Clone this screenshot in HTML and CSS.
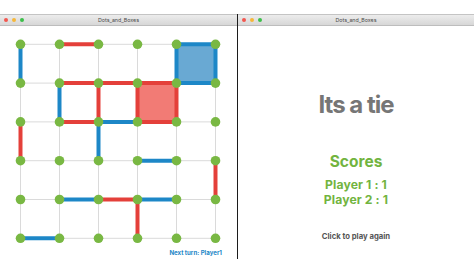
FILE: index.html
```html
<!DOCTYPE html>
<html>
<head>
<meta name="viewport" content="width=device-width, initial-scale=1">
<link rel="stylesheet" href="styles.css">
</head>
<body>
<div class="desk">

<div class="window" id="board">
  <div class="titlebar">
    <span class="light red"></span><span class="light yellow"></span><span class="light green"></span>
    <span class="title">Dots_and_Boxes</span>
  </div>
  <svg class="grid" width="237" height="222" viewBox="0 0 237 222">
    <g class="guides">
      <line x1="20.5" y1="18.3" x2="215.5" y2="18.3"/>
      <line x1="20.5" y1="57.1" x2="215.5" y2="57.1"/>
      <line x1="20.5" y1="95.9" x2="215.5" y2="95.9"/>
      <line x1="20.5" y1="134.7" x2="215.5" y2="134.7"/>
      <line x1="20.5" y1="173.5" x2="215.5" y2="173.5"/>
      <line x1="20.5" y1="212.3" x2="215.5" y2="212.3"/>
      <line x1="20.5" y1="18.3" x2="20.5" y2="212.3"/>
      <line x1="59.5" y1="18.3" x2="59.5" y2="212.3"/>
      <line x1="98.5" y1="18.3" x2="98.5" y2="212.3"/>
      <line x1="137.5" y1="18.3" x2="137.5" y2="212.3"/>
      <line x1="176.5" y1="18.3" x2="176.5" y2="212.3"/>
      <line x1="215.5" y1="18.3" x2="215.5" y2="212.3"/>
    </g>
    <rect class="box-blue" x="176.5" y="18.3" width="39" height="38.8"/>
    <rect class="box-red" x="137.5" y="57.1" width="39" height="38.8"/>
    <g class="edge-red">
      <line x1="59.5" y1="18.3" x2="98.5" y2="18.3"/>
      <line x1="57.5" y1="57.1" x2="178.5" y2="57.1"/>
      <line x1="98.5" y1="57.1" x2="98.5" y2="95.9"/>
      <line x1="137.5" y1="57.1" x2="137.5" y2="95.9"/>
      <line x1="176.5" y1="57.1" x2="176.5" y2="95.9"/>
      <line x1="135.5" y1="95.9" x2="178.5" y2="95.9"/>
      <line x1="59.5" y1="95.9" x2="98.5" y2="95.9"/>
      <line x1="20.5" y1="95.9" x2="20.5" y2="134.7"/>
      <line x1="215.5" y1="134.7" x2="215.5" y2="173.5"/>
      <line x1="98.5" y1="173.5" x2="137.5" y2="173.5"/>
      <line x1="137.5" y1="173.5" x2="137.5" y2="212.3"/>
    </g>
    <g class="edge-blue">
      <line x1="20.5" y1="18.3" x2="20.5" y2="57.1"/>
      <line x1="174.5" y1="18.3" x2="217.5" y2="18.3"/>
      <line x1="178.5" y1="57.1" x2="217.5" y2="57.1"/>
      <line x1="176.5" y1="18.3" x2="176.5" y2="57.1"/>
      <line x1="215.5" y1="18.3" x2="215.5" y2="57.1"/>
      <line x1="59.5" y1="57.1" x2="59.5" y2="95.9"/>
      <line x1="98.5" y1="95.9" x2="137.5" y2="95.9"/>
      <line x1="98.5" y1="95.9" x2="98.5" y2="134.7"/>
      <line x1="137.5" y1="134.7" x2="176.5" y2="134.7"/>
      <line x1="59.5" y1="173.5" x2="98.5" y2="173.5"/>
      <line x1="137.5" y1="173.5" x2="176.5" y2="173.5"/>
      <line x1="20.5" y1="212.3" x2="59.5" y2="212.3"/>
    </g>
    <g class="dots">
      <circle cx="20.5" cy="18.3" r="4.8"/><circle cx="59.5" cy="18.3" r="4.8"/><circle cx="98.5" cy="18.3" r="4.8"/><circle cx="137.5" cy="18.3" r="4.8"/><circle cx="176.5" cy="18.3" r="4.8"/><circle cx="215.5" cy="18.3" r="4.8"/>
      <circle cx="20.5" cy="57.1" r="4.8"/><circle cx="59.5" cy="57.1" r="4.8"/><circle cx="98.5" cy="57.1" r="4.8"/><circle cx="137.5" cy="57.1" r="4.8"/><circle cx="176.5" cy="57.1" r="4.8"/><circle cx="215.5" cy="57.1" r="4.8"/>
      <circle cx="20.5" cy="95.9" r="4.8"/><circle cx="59.5" cy="95.9" r="4.8"/><circle cx="98.5" cy="95.9" r="4.8"/><circle cx="137.5" cy="95.9" r="4.8"/><circle cx="176.5" cy="95.9" r="4.8"/><circle cx="215.5" cy="95.9" r="4.8"/>
      <circle cx="20.5" cy="134.7" r="4.8"/><circle cx="59.5" cy="134.7" r="4.8"/><circle cx="98.5" cy="134.7" r="4.8"/><circle cx="137.5" cy="134.7" r="4.8"/><circle cx="176.5" cy="134.7" r="4.8"/><circle cx="215.5" cy="134.7" r="4.8"/>
      <circle cx="20.5" cy="173.5" r="4.8"/><circle cx="59.5" cy="173.5" r="4.8"/><circle cx="98.5" cy="173.5" r="4.8"/><circle cx="137.5" cy="173.5" r="4.8"/><circle cx="176.5" cy="173.5" r="4.8"/><circle cx="215.5" cy="173.5" r="4.8"/>
      <circle cx="20.5" cy="212.3" r="4.8"/><circle cx="59.5" cy="212.3" r="4.8"/><circle cx="98.5" cy="212.3" r="4.8"/><circle cx="137.5" cy="212.3" r="4.8"/><circle cx="176.5" cy="212.3" r="4.8"/><circle cx="215.5" cy="212.3" r="4.8"/>
    </g>
  </svg>
  <div class="turn">Next turn: Player1</div>
</div>

<div class="window" id="result">
  <div class="titlebar">
    <span class="light red"></span><span class="light yellow"></span><span class="light green"></span>
    <span class="title">Dots_and_Boxes</span>
  </div>
  <div class="result-body">
    <div class="verdict">Its a tie</div>
    <div class="scores-head">Scores</div>
    <div class="score">Player 1 : 1</div>
    <div class="score">Player 2 : 1</div>
    <div class="again">Click to play again</div>
  </div>
</div>

</div>
</body>
</html>
```

FILE: styles.css
```css
body {
  margin: 0;
  background: #ffffff;
  font-family: "Inter", "Liberation Sans", sans-serif;
}

.desk {
  display: flex;
  padding-top: 14px;
  height: 245px;
  overflow: hidden;
}

.window {
  width: 237px;
  background: #ffffff;
  display: flex;
  flex-direction: column;
}

#result {
  border-left: 1px solid #1c1c1c;
}

/* mac style title bar */
.titlebar {
  position: relative;
  height: 10px;
  border-top: 1px solid #c4c4c4;
  border-bottom: 1px solid #bdbdbd;
  background: linear-gradient(#ececec, #d7d7d7);
  display: flex;
  align-items: center;
  gap: 3.7px;
  padding-left: 4px;
}

.light {
  width: 4.2px;
  height: 4.2px;
  border-radius: 50%;
}
.light.red { background: #f2574f; }
.light.yellow { background: #f6b73a; }
.light.green { background: #3cbf4a; }

.title {
  position: absolute;
  left: 0;
  right: 0;
  text-align: center;
  font-size: 5.3px;
  color: #4a4a4a;
  line-height: 10px;
}

.grid {
  display: block;
}

.guides line {
  stroke: #dadada;
  stroke-width: 1;
}

.box-blue { fill: #69a9d3; }
.box-red { fill: #f27b75; }

.edge-red line {
  stroke: #e4403a;
  stroke-width: 4;
}

.edge-blue line {
  stroke: #1d87c7;
  stroke-width: 4;
}

.dots circle {
  fill: #79b843;
}

.turn {
  text-align: right;
  padding-right: 15px;
  font-size: 6.1px;
  font-weight: 700;
  line-height: 10px;
  color: #1d87c7;
}

.result-body {
  display: flex;
  flex-direction: column;
  align-items: center;
  padding-top: 64px;
}

.verdict {
  font-size: 24px;
  line-height: 30px;
  font-weight: 700;
  color: #767676;
  letter-spacing: -1px;
}

.scores-head {
  margin-top: 32px;
  font-size: 15.5px;
  line-height: 20px;
  font-weight: 700;
  color: #72b43f;
}

.score {
  font-size: 12.2px;
  line-height: 14.7px;
  font-weight: 700;
  color: #72b43f;
  letter-spacing: 0.1px;
}

.scores-head + .score {
  margin-top: 6px;
}

.again {
  margin-top: 25px;
  font-size: 7.7px;
  line-height: 10px;
  font-weight: 700;
  color: #555555;
}
```
